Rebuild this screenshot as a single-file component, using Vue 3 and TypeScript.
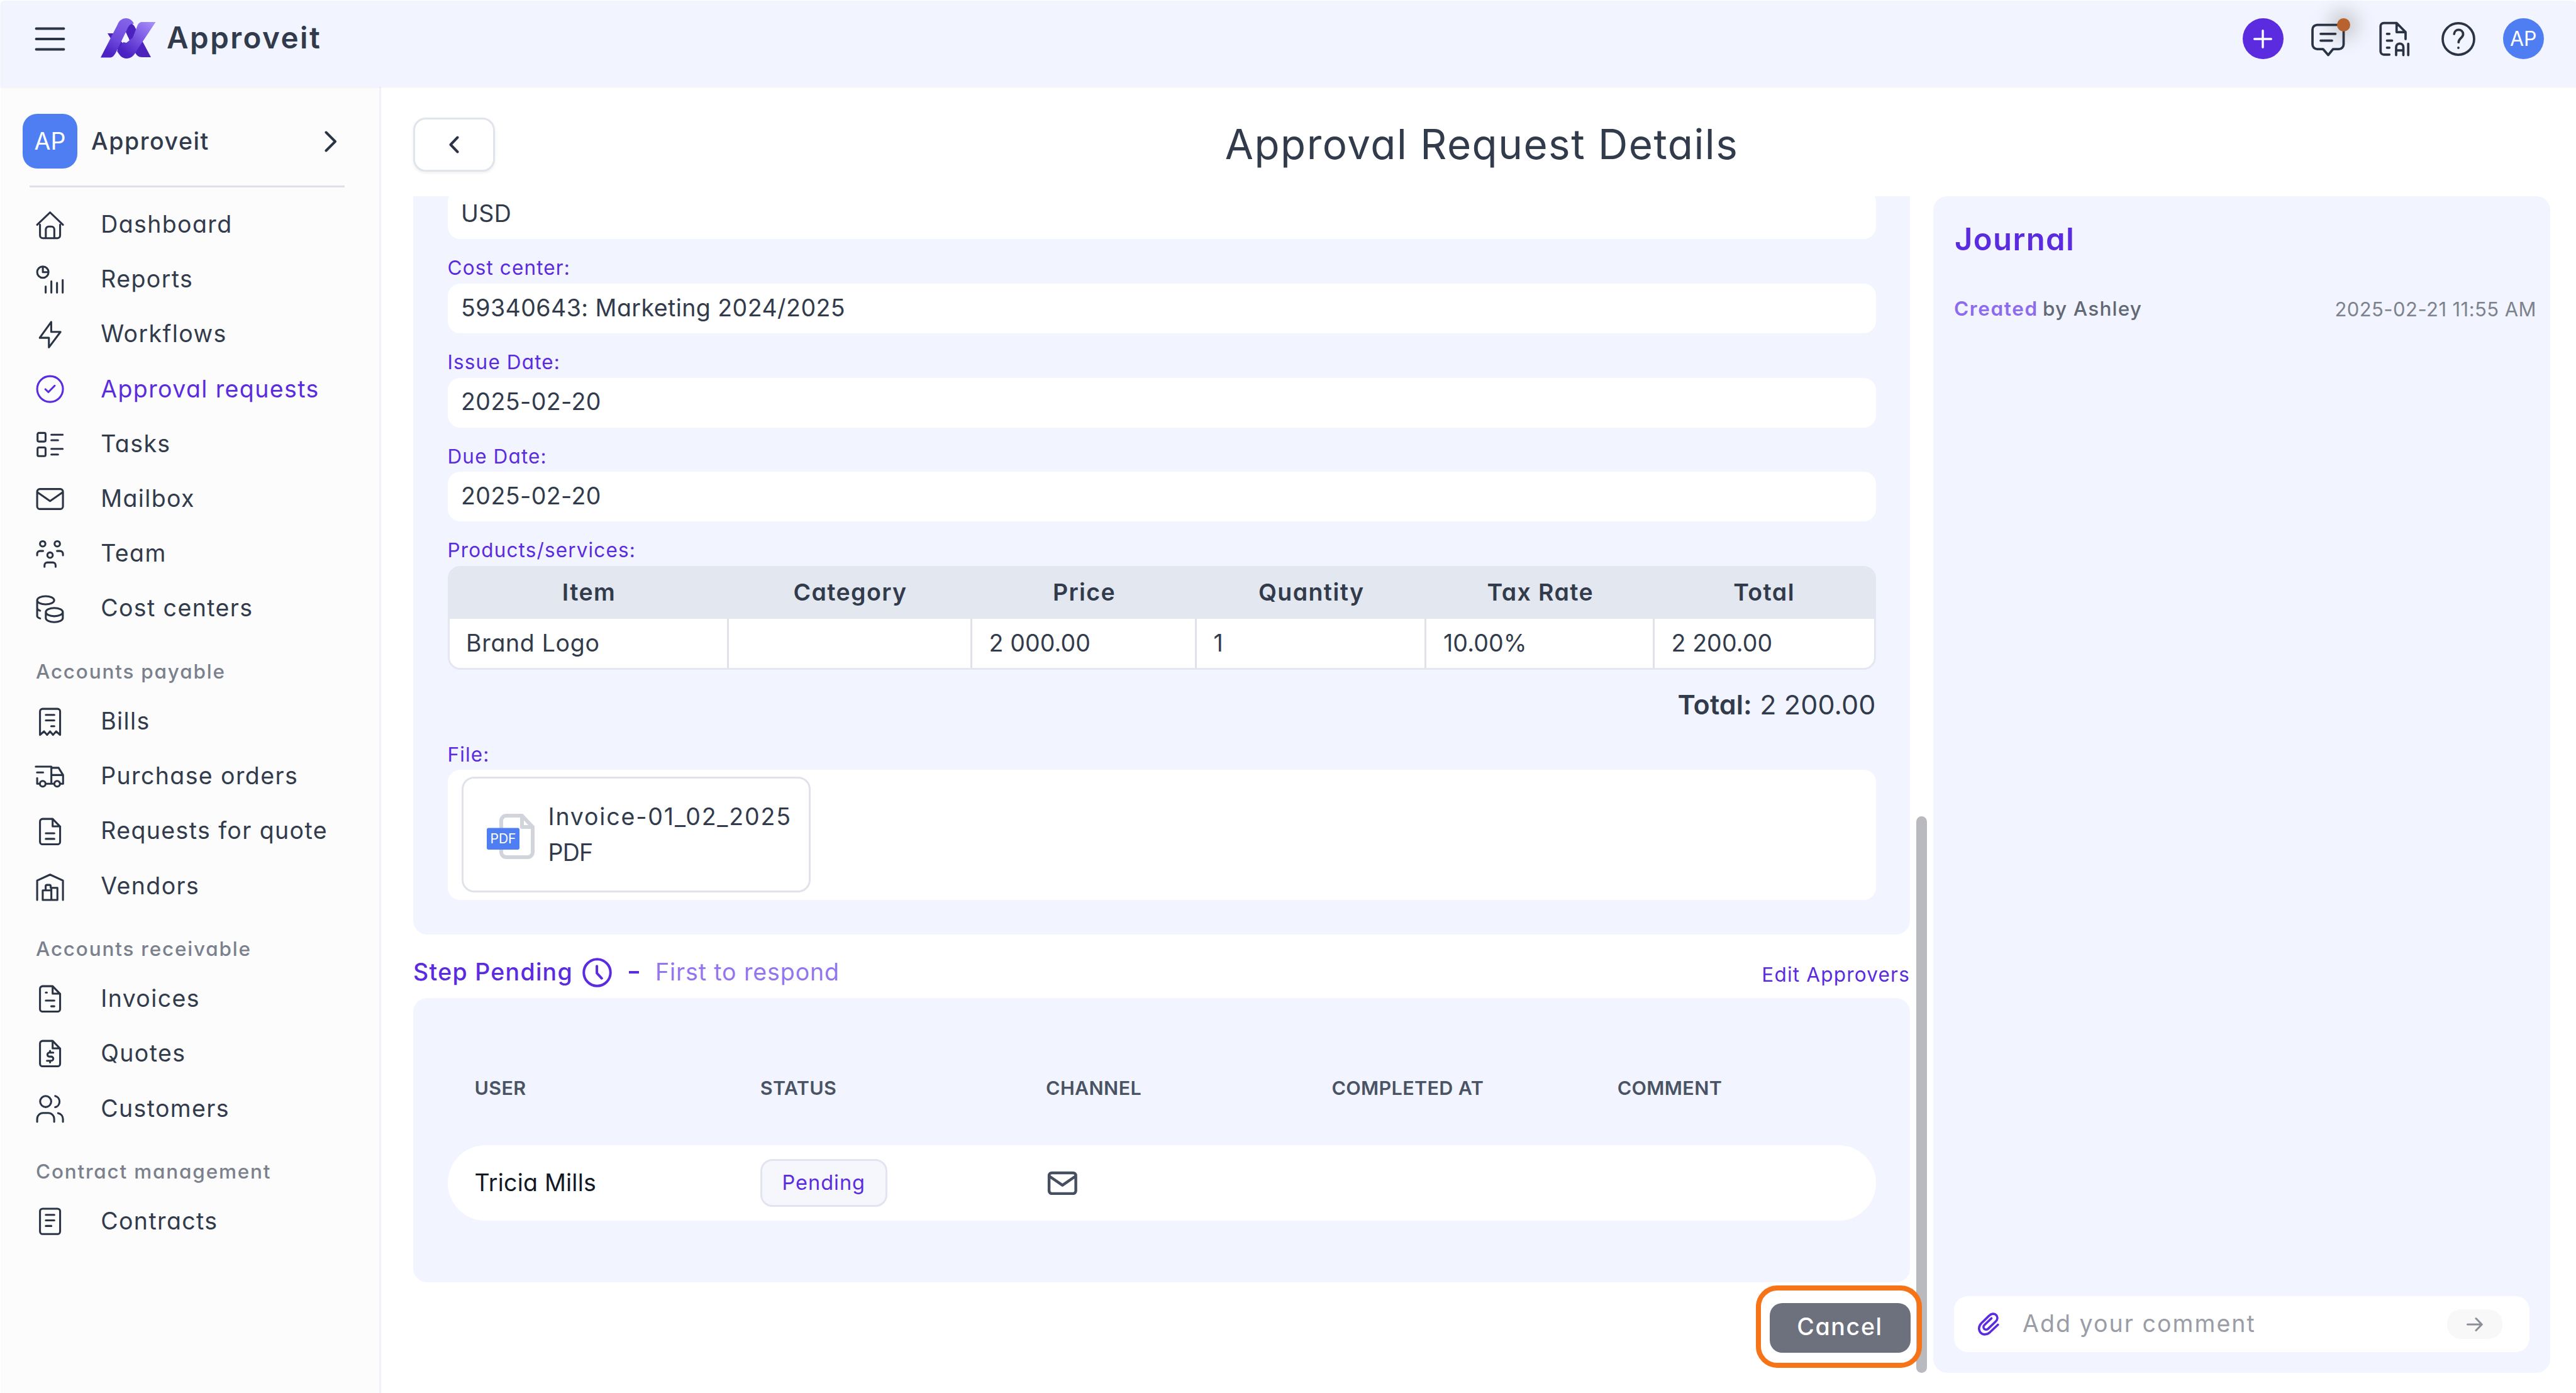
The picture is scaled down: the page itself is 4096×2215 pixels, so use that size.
<script setup lang="ts">
interface NavItem {
  label: string
  icon: string
  active?: boolean
}
interface NavGroup {
  title?: string
  items: NavItem[]
}
interface Field {
  label?: string
  value: string
}

const page = 'M14 2.5H6.2a2 2 0 0 0-2 2v15.7a2 2 0 0 0 2 2h11.6a2 2 0 0 0 2-2V8.5zV8.3h5.8'
const mail =
  'M4 4.7h16a2 2 0 0 1 2 2v11.5a2 2 0 0 1-2 2H4a2 2 0 0 1-2-2V6.7a2 2 0 0 1 2-2zM2.2 7.2l9.8 6.8l9.8-6.8'

const groups: NavGroup[] = [
  {
    items: [
      {
        label: 'Dashboard',
        icon: 'M2 12.4L12 2.8l10 9.6M4.2 12.3v8.3a2.2 2.2 0 0 0 2.2 2.2h11.2a2.2 2.2 0 0 0 2.2-2.2v-8.3M8.7 22.6v-6.6a2.2 2.2 0 0 1 2.2-2.2h2.2a2.2 2.2 0 0 1 2.2 2.2v6.6',
      },
      {
        label: 'Reports',
        icon: 'M2 6.7a4.4 4.4 0 1 0 8.8 0a4.4 4.4 0 1 0-8.8 0M6.4 2.6v4.1h4.2M8.6 17.8v4.8M13 13.8v8.8M17.4 15v7.6M21.8 12.8v9.8',
      },
      { label: 'Workflows', icon: 'M12.9 2.9v7.7h7.2l-9 12v-7.4H4z' },
      {
        label: 'Approval requests',
        active: true,
        icon: 'M2 12a10 10 0 1 0 20 0a10 10 0 1 0-20 0M8.4 12.2l2.3 2.2l4.9-5',
      },
      {
        label: 'Tasks',
        icon: 'M3.3 3.6h4.2a1 1 0 0 1 1 1v4.7a1 1 0 0 1-1 1H3.3a1 1 0 0 1-1-1V4.6a1 1 0 0 1 1-1zM3.3 14.9h4.2a1 1 0 0 1 1 1v4.7a1 1 0 0 1-1 1H3.3a1 1 0 0 1-1-1v-4.7a1 1 0 0 1 1-1zM13 5h8.8M13 9.3h5.2M13 16h8.8M13 20.4h5.2',
      },
      { label: 'Mailbox', icon: mail },
      {
        label: 'Team',
        icon: 'M4.2 4.75a2.1 2.1 0 1 0 4.2 0a2.1 2.1 0 1 0-4.2 0M15.5 4.75a2.1 2.1 0 1 0 4.2 0a2.1 2.1 0 1 0-4.2 0M9.9 13.5a2.1 2.1 0 1 0 4.2 0a2.1 2.1 0 1 0-4.2 0M2 13.7v-1.2a2.2 2.2 0 0 1 2.2-2.2h2.4M22 13.7v-1.2a2.2 2.2 0 0 0-2.2-2.2h-2.4M7.7 22.6v-1.2a2.2 2.2 0 0 1 2.2-2.2h4.2a2.2 2.2 0 0 1 2.2 2.2v1.2',
      },
      {
        label: 'Cost centers',
        icon: 'M2 5.6a6.6 3.2 0 1 0 13.2 0a6.6 3.2 0 1 0-13.2 0M2 5.6v12.2c0 .8.9 1.4 2.3 1.9M2 11.7c0 .8.9 1.5 2.3 2M8.7 14.8a6.6 3.2 0 1 0 13.2 0a6.6 3.2 0 1 0-13.2 0M8.7 14.8v4.6c0 1.8 3 3.2 6.6 3.2s6.6-1.4 6.6-3.2v-4.6',
      },
    ],
  },
  {
    title: 'Accounts payable',
    items: [
      {
        label: 'Bills',
        icon: 'M4.2 22.7V4.5a2 2 0 0 1 2-2h11.6a2 2 0 0 1 2 2v18.2l-3.1-2.7l-2.4 2.7L12 20l-2.3 2.7L7.3 20zM8.7 7.2h6.6M8.7 11.5h6.6M12.9 16h2.4',
      },
      {
        label: 'Purchase orders',
        icon: 'M.9 4.9H13v13.3M1.9 9.4h4.7M2 13.8v4.4h2.2M8.5 18.2h6.8M13 5.8h5.6l3.5 5.6v6.8h-2.4M13 11.4h9M4.1 18.2a2.2 2.2 0 1 0 4.4 0a2.2 2.2 0 1 0-4.4 0M15.3 18.2a2.2 2.2 0 1 0 4.4 0a2.2 2.2 0 1 0-4.4 0',
      },
      { label: 'Requests for quote', icon: page + 'M8.7 13.7h6.6M8.7 18h6.6' },
      {
        label: 'Vendors',
        icon: 'M2 22.9V7.9L12 3.3l10 4.6v15M6.3 15.5H13v7.4H6.3zM13 13.5h4.7v9.4H13zM8.6 15.5v-3.2a1 1 0 0 1 1-1h1.9a1 1 0 0 1 1 1v1.2',
      },
    ],
  },
  {
    title: 'Accounts receivable',
    items: [
      { label: 'Invoices', icon: page + 'M8.7 7.4h.8M8.7 13.7h6.6M12.9 18.1h2.4' },
      {
        label: 'Quotes',
        icon: page + 'M14.5 11.6h-3.3a1.6 1.6 0 0 0 0 3.1h1.7a1.6 1.6 0 0 1 0 3.2H9.6M12 10.3v1.3M12 17.9v1.3',
      },
      {
        label: 'Customers',
        icon: 'M4.3 6.6a4.3 4.3 0 1 0 8.6 0a4.3 4.3 0 1 0-8.6 0M16 2.3a4.5 4.5 0 0 1 0 8.7M2 22.3v-2.2a4.6 4.6 0 0 1 4.6-4.6h4a4.6 4.6 0 0 1 4.6 4.6v2.2M18.2 15.6a4.5 4.5 0 0 1 3.8 4.5v2.2',
      },
    ],
  },
  {
    title: 'Contract management',
    items: [
      {
        label: 'Contracts',
        icon: 'M6.2 2.4h11.6a2 2 0 0 1 2 2v15.7a2 2 0 0 1-2 2H6.2a2 2 0 0 1-2-2V4.4a2 2 0 0 1 2-2zM8.7 7.2h6.6M8.7 11.5h6.6M8.7 15.8h4.3',
      },
    ],
  },
]

const fields: Field[] = [
  { value: 'USD' },
  { label: 'Cost center:', value: '59340643: Marketing 2024/2025' },
  { label: 'Issue Date:', value: '2025-02-20' },
  { label: 'Due Date:', value: '2025-02-20' },
]

const productColumns: string[] = ['Item', 'Category', 'Price', 'Quantity', 'Tax Rate', 'Total']
const productRow: string[] = ['Brand Logo', '', '2 000.00', '1', '10.00%', '2 200.00']
const stepColumns: string[] = ['USER', 'STATUS', 'CHANNEL', 'COMPLETED AT', 'COMMENT']
</script>

<template>
  <div class="app">
    <header class="topbar">
      <svg class="burger" viewBox="0 0 48 40"><path d="M2 3.5h44M2 20h44M2 36.5h44" /></svg>
      <svg class="logo" viewBox="0 0 88 65">
        <defs>
          <linearGradient id="ribbonLeft" x1="0.7" y1="0" x2="0.2" y2="1">
            <stop offset="0" stop-color="#8463ea" />
            <stop offset="0.5" stop-color="#6f4bdd" />
            <stop offset="0.9" stop-color="#4b22c3" />
          </linearGradient>
          <linearGradient id="ribbonRight" x1="1" y1="0" x2="0.2" y2="1">
            <stop offset="0" stop-color="#ab92fb" />
            <stop offset="0.45" stop-color="#7c5ae4" />
            <stop offset="0.9" stop-color="#4b22c3" />
          </linearGradient>
        </defs>
        <path fill="#4b22bd" d="M11 24h12l26 34-8 6-8-4z" />
        <path fill="#4b22bd" d="M38 16c6-12 14-8 17-1l25 47H66c-6 0-9-3-12-9L40 22z" />
        <path fill="url(#ribbonRight)" d="M66 6h21.5L57 52c-4 8-9 12-16 12s-11-5-15-12l10-14 5 1 10-8 7-18c2-5 4-7 8-7z" />
        <path fill="url(#ribbonLeft)" d="M0 62.5L27 10C32-3 48-3 53 9c-6-1-9 4-11 9L24 55c-3 5-5 7.5-10 7.5z" />
        <path fill="#f2f5ff" d="M40.5 26l4.5 6.5-4.5 5.5-4.5-5.5z" />
      </svg>
      <span class="brand">Approveit</span>
      <div class="actions">
        <span class="round add">
          <svg viewBox="0 0 30 30"><path d="M15 1.7v26.6M1.7 15h26.6" /></svg>
        </span>
        <span class="action">
          <svg class="line" viewBox="0 0 24 24">
            <path d="M5 3h13.8a3 3 0 0 1 3 3v9.4a3 3 0 0 1-3 3h-3.7L12 22.2l-3.3-3.8H5a3 3 0 0 1-3-3V6a3 3 0 0 1 3-3zM7.2 8.7h9.4M7.2 13h7.2" />
          </svg>
          <i class="dot"></i>
        </span>
        <span class="action">
          <svg class="line" viewBox="-1 0 24 24">
            <path d="M8.7 21.9H5.1a2 2 0 0 1-2-2V3.8a2 2 0 0 1 2-2h8.2L19 7.6V12M13.3 1.9v5.7h5.6M7.2 8.7h1.5M7.2 13h3.2M7.2 17.5h1.5M13 22.2v-5a2.3 2.3 0 0 1 4.6 0v5M13 19.2h4.6M20.7 15v7.2" />
          </svg>
        </span>
        <span class="action">
          <svg class="line" viewBox="0 0 24 24">
            <path d="M2 12a10 10 0 1 0 20 0a10 10 0 1 0-20 0M9.3 8.8c.2-3.5 5.6-3.5 5.7.1c0 2.4-2.7 2.5-2.9 5.2M12 17.5v.1" />
          </svg>
        </span>
        <span class="round avatar">AP</span>
      </div>
    </header>

    <div class="body">
      <aside class="sidebar">
        <div class="company">
          <span class="badge">AP</span>
          <span class="company-name">Approveit</span>
          <svg class="chevron" viewBox="0 0 20 34"><path d="M2.5 2.5L17 17L2.5 31.5" /></svg>
        </div>
        <div class="divider"></div>
        <nav>
          <section v-for="(group, i) in groups" :key="i">
            <h2 v-if="group.title">{{ group.title }}</h2>
            <a v-for="item in group.items" :key="item.label" :class="{ active: item.active }">
              <svg viewBox="0 0 24 24"><path :d="item.icon" /></svg>
              <span>{{ item.label }}</span>
            </a>
          </section>
        </nav>
      </aside>

      <main>
        <div class="heading">
          <button class="back" type="button">
            <svg viewBox="0 0 18 28"><path d="M14.5 2.5L3.5 14l11 11.5" /></svg>
          </button>
          <h1>Approval Request Details</h1>
        </div>

        <div class="columns">
          <div class="scroller">
            <div class="panel details">
              <div v-for="(field, i) in fields" :key="i" class="field">
                <label v-if="field.label">{{ field.label }}</label>
                <div class="value">{{ field.value }}</div>
              </div>
              <div class="field">
                <label>Products/services:</label>
                <div class="table">
                  <span v-for="col in productColumns" :key="col" class="th">{{ col }}</span>
                  <span v-for="(cell, i) in productRow" :key="i" class="td">{{ cell }}</span>
                </div>
              </div>
              <div class="sum"><b>Total:</b> <span>2 200.00</span></div>
              <div class="field">
                <label>File:</label>
                <div class="files">
                  <div class="file">
                    <svg viewBox="0 0 76 72">
                      <path class="sheet" d="M56 3H31a8 8 0 0 0-8 8v50a8 8 0 0 0 8 8h34a8 8 0 0 0 8-8V21zv18h17" />
                      <rect y="22.5" width="52" height="34.5" rx="3" />
                      <text x="26" y="47" text-anchor="middle">PDF</text>
                    </svg>
                    <div class="file-name"><span>Invoice-01_02_2025</span><span class="ext">PDF</span></div>
                  </div>
                </div>
              </div>
            </div>

            <div class="step">
              <span class="step-title">Step Pending</span>
              <svg viewBox="0 0 24 24"><path d="M2 12a10 10 0 1 0 20 0a10 10 0 1 0-20 0M11.8 7.2v5.2l3.6 3.9" /></svg>
              <span class="dash"></span>
              <span class="rule">First to respond</span>
              <a class="edit">Edit Approvers</a>
            </div>

            <div class="panel approvers">
              <div class="row head">
                <span v-for="col in stepColumns" :key="col">{{ col }}</span>
              </div>
              <div class="row person">
                <span>Tricia Mills</span>
                <span><em>Pending</em></span>
                <span><svg viewBox="-0.4 0.5 24 24"><path :d="mail" /></svg></span>
              </div>
            </div>

            <div class="footer">
              <div class="ring"><button class="cancel" type="button">Cancel</button></div>
            </div>
          </div>

          <div class="track"><div class="thumb"></div></div>

          <aside class="panel journal">
            <h3>Journal</h3>
            <div class="entry">
              <span class="what">Created</span>
              <span class="who">by Ashley</span>
              <time>2025-02-21 11:55 AM</time>
            </div>
            <div class="comment">
              <svg class="clip" viewBox="0 0 34 37">
                <path d="M31.8 19.5L19.3 31.2C14.8 35.8 8 36 4.2 32C.6 28 1 21.5 5.5 17L18 4.9C21.3 1.5 26 1.2 29 4C31.8 7 31.5 11 28.3 14.2L16.5 25.6C14.5 27.5 11.8 27.8 10 26C8.3 24.2 8.6 21.7 10.5 19.8L21.5 9.2" />
              </svg>
              <span class="placeholder">Add your comment</span>
              <span class="send"><svg viewBox="0 0 26 22"><path d="M1.5 11h22.5M15 1.5L24.3 11L15 20.5" /></svg></span>
            </div>
          </aside>
        </div>
      </main>
    </div>
  </div>
</template>

<style>
html,
body {
  margin: 0;
  background: #ffffff;
}
</style>

<style scoped>
.app {
  box-sizing: border-box;
  width: 4096px;
  height: 2215px;
  overflow: hidden;
  padding: 1px 0 0 1px;
  display: flex;
  flex-direction: column;
  background: #ffffff;
  color: #323b4b;
  font-family: 'Inter', 'Open Sans', sans-serif;
  font-feature-settings: 'cv11' 1;
  font-size: 37.5px;
  line-height: 1;
  letter-spacing: 0.037em;
}
svg {
  display: block;
  flex: none;
  fill: none;
  stroke-linecap: round;
  stroke-linejoin: round;
}

/* Top bar */
.topbar {
  flex: none;
  box-sizing: border-box;
  height: 137px;
  padding: 0 51px 16px 54px;
  display: flex;
  align-items: center;
  background: #f2f5ff;
  border-radius: 6px 6px 0 0;
  box-shadow: 0 1px 3px rgba(0, 0, 0, 0.06);
  position: relative;
}
.burger {
  width: 49px;
  height: 40px;
  stroke: #2b3445;
  stroke-width: 3.8;
}
.logo {
  width: 88px;
  height: 65px;
  margin-left: 56px;
}
.logo path {
  stroke: none;
}
.brand {
  margin-left: 17px;
  padding-bottom: 3px;
  font-size: 47.5px;
  font-weight: 600;
  letter-spacing: 0.052em;
}
.actions {
  margin-left: auto;
  display: flex;
  gap: 38px;
}
.round,
.action {
  width: 65.5px;
  height: 65.5px;
  display: flex;
  align-items: center;
  justify-content: center;
  border-radius: 50%;
  position: relative;
}
.add {
  background: #5b2be0;
}
.add svg {
  width: 30px;
  height: 30px;
  stroke: #ffffff;
  stroke-width: 3.4;
}
.line {
  width: 60px;
  height: 60px;
  stroke: #2b3445;
  stroke-width: 1.5;
}
.dot {
  position: absolute;
  top: 0;
  right: -2px;
  width: 21px;
  height: 21px;
  border-radius: 50%;
  background: #b8622f;
  box-shadow: 0 0 28px 12px rgba(70, 70, 60, 0.25);
}
.avatar {
  background: #4f7ef3;
  color: #ffffff;
  font-size: 32px;
  letter-spacing: 0;
}

/* Sidebar */
.body {
  flex: 1;
  display: flex;
  min-height: 0;
}
.sidebar {
  flex: none;
  box-sizing: border-box;
  width: 605px;
  border-right: 3px solid #f1f1f9;
  background: #fcfcfd;
}
.company {
  display: flex;
  align-items: center;
  height: 87px;
  margin: 43px 0 0 35px;
}
.badge {
  width: 87px;
  height: 87px;
  border-radius: 23px;
  display: flex;
  align-items: center;
  justify-content: center;
  background: #4f7ef3;
  color: #ffffff;
  letter-spacing: 0;
}
.company-name {
  margin-left: 22px;
  font-weight: 500;
  letter-spacing: 0.042em;
}
.chevron {
  width: 20px;
  height: 34px;
  margin-left: auto;
  margin-right: 67px;
  stroke: #2b3445;
  stroke-width: 4;
}
.divider {
  height: 3px;
  margin: 27px 55px 15px 46px;
  background: #dde0ea;
}
nav h2 {
  margin: 0;
  box-sizing: border-box;
  height: 92.3px;
  padding: 41px 0 0 56px;
  font-size: 31.5px;
  line-height: 32px;
  font-weight: 500;
  letter-spacing: 0.057em;
  color: #7b818c;
}
nav a {
  display: flex;
  align-items: center;
  height: 87.22px;
  padding-left: 54px;
}
nav svg {
  width: 49.2px;
  height: 49.2px;
  margin-right: 56px;
  stroke: #2b3445;
  stroke-width: 1.5;
}
nav .active {
  color: #5b2be0;
}
nav .active svg {
  stroke: #5b2be0;
}

/* Main area */
main {
  flex: 1;
  padding-left: 51px;
  display: flex;
  flex-direction: column;
}
.heading {
  flex: none;
  display: flex;
  align-items: center;
  height: 174px;
  box-sizing: border-box;
  padding: 10px 41px 0 0;
}
.back {
  box-sizing: border-box;
  width: 130px;
  height: 86px;
  padding: 0;
  display: flex;
  align-items: center;
  justify-content: center;
  border: 3px solid #e0e5eb;
  border-radius: 20px;
  background: #ffffff;
  box-shadow: 0 2px 4px rgba(30, 40, 60, 0.08);
}
.back svg {
  width: 18px;
  height: 28px;
  stroke: #2b3445;
  stroke-width: 4;
}
h1 {
  flex: 1;
  margin: 0 130px 0 0;
  text-align: center;
  font-size: 65.5px;
  font-weight: 400;
  letter-spacing: 0.023em;
}
.columns {
  flex: 1;
  display: flex;
  min-height: 0;
}
.panel {
  box-sizing: border-box;
  background: #f2f5ff;
  border-radius: 22px;
}
.scroller {
  width: 2380px;
}
.details {
  display: flow-root;
  height: 1174px;
  padding: 0 54.5px;
  border-radius: 0 0 22px 22px;
  overflow: hidden;
}
.field:first-child {
  margin-top: -11px;
}
label {
  display: block;
  height: 70.8px;
  box-sizing: border-box;
  padding-top: 30px;
  font-size: 31.5px;
  line-height: 32px;
  letter-spacing: 0.036em;
  color: #5b2be0;
}
.value {
  box-sizing: border-box;
  height: 79px;
  display: flex;
  align-items: center;
  padding: 0 0 2px 21.5px;
  border-radius: 20px;
  background: #ffffff;
  letter-spacing: 0.012em;
}
.table {
  box-sizing: border-box;
  height: 165px;
  display: grid;
  grid-template-columns: 444px 387px 357px 365.5px 362.5px 1fr;
  grid-template-rows: 81px 1fr;
  border: 3px solid #e3e7ef;
  border-radius: 20px;
  overflow: hidden;
  background: #ffffff;
}
.th,
.td {
  display: flex;
  align-items: center;
}
.th {
  justify-content: center;
  padding-bottom: 3px;
  background: #e3e7ef;
  font-weight: 600;
}
.td {
  padding-left: 27px;
  border-right: 3px solid #dfe2ea;
  letter-spacing: 0.003em;
}
.td:nth-child(7) {
  padding-left: 26.5px;
  letter-spacing: 0.018em;
}
.td:last-child {
  border-right: 0;
}
.sum {
  height: 55.4px;
  padding-top: 33px;
  text-align: right;
  font-size: 43px;
  line-height: 44px;
  letter-spacing: 0.003em;
}
.sum b {
  font-weight: 600;
}
.files {
  box-sizing: border-box;
  height: 207px;
  padding: 11px 22px;
  border-radius: 20px;
  background: #ffffff;
}
.file {
  box-sizing: border-box;
  width: 555px;
  height: 184px;
  padding-left: 37px;
  display: flex;
  align-items: center;
  border: 3px solid #e0e3ea;
  border-radius: 20px;
}
.file svg {
  width: 76px;
  height: 72px;
  margin-top: 5px;
}
.sheet {
  stroke: #d2d4db;
  stroke-width: 6;
}
.file rect {
  fill: #4f7ef3;
}
.file text {
  fill: #ffffff;
  font-size: 21px;
  letter-spacing: 0;
}
.file-name {
  margin-left: 22px;
  display: flex;
  flex-direction: column;
  line-height: 57.5px;
  letter-spacing: 0.049em;
}
.ext {
  letter-spacing: -0.02em;
}

/* Approval step */
.step {
  height: 101px;
  display: flex;
  align-items: center;
  padding-top: 19px;
  box-sizing: border-box;
}
.step-title {
  color: #5b2be0;
  font-weight: 500;
  letter-spacing: 0.034em;
}
.step svg {
  width: 51px;
  height: 51px;
  margin-left: 13px;
  stroke: #5b2be0;
  stroke-width: 1.9;
}
.dash {
  width: 16px;
  height: 4px;
  margin: 0 26px 0 25px;
  background: #5b2be0;
}
.rule {
  letter-spacing: 0.024em;
  color: #9375f0;
}
.edit {
  margin-left: auto;
  padding-top: 8px;
  font-size: 31.5px;
  letter-spacing: 0.038em;
  color: #5b2be0;
}
.approvers {
  height: 452px;
  padding: 126px 54.5px 0;
}
.row {
  display: grid;
  grid-template-columns: repeat(5, 454.3px);
  align-items: center;
  padding-left: 43px;
}
.head {
  height: 34px;
  margin-bottom: 74px;
  font-size: 30.5px;
  font-weight: 600;
  letter-spacing: 0.012em;
  color: #4a5363;
}
.person {
  height: 120px;
  border-radius: 60px;
  background: #ffffff;
  color: #121826;
  letter-spacing: 0.006em;
}
.person em {
  box-sizing: border-box;
  width: 202px;
  height: 76px;
  display: flex;
  align-items: center;
  justify-content: center;
  border: 3px solid #e2e5f1;
  border-radius: 19px;
  background: #f6f7fc;
  color: #5b2be0;
  font-style: normal;
  font-size: 32.5px;
  letter-spacing: 0.03em;
}
.person svg {
  width: 51px;
  height: 51px;
  stroke: #464f60;
  stroke-width: 2.1;
}
.footer {
  display: flex;
  justify-content: flex-end;
  height: 145px;
  padding-top: 5px;
  margin-right: -19px;
}
.ring {
  box-sizing: border-box;
  position: relative;
  z-index: 1;
  width: 264px;
  height: 131px;
  border: 8px solid #f67318;
  border-radius: 34px;
  display: flex;
  align-items: center;
  justify-content: center;
}
.cancel {
  width: 224px;
  height: 79px;
  padding: 0 0 2px;
  flex: none;
  margin-top: 3px;
  margin-right: -3px;
  border: 0;
  border-radius: 20px;
  background: #6c717d;
  color: #ffffff;
  font: inherit;
  font-weight: 500;
  letter-spacing: 0.045em;
}
.track {
  width: 17px;
  padding: 986px 10px 0;
}
.thumb {
  height: 885px;
  border-radius: 9px;
  background: #b9babf;
}

/* Journal */
.journal {
  width: 981px;
  height: 1871px;
  padding: 0 33px 33px;
  display: flex;
  flex-direction: column;
}
h3 {
  margin: 44px 0 0 1px;
  font-size: 49px;
  line-height: 50px;
  font-weight: 600;
  color: #5b2be0;
}
.entry {
  margin: 69px -11px 0 0;
  display: flex;
  align-items: center;
  height: 32px;
  font-size: 31.5px;
}
.what {
  color: #8c6bee;
  font-weight: 600;
  letter-spacing: 0.052em;
}
.who {
  margin-left: 7px;
  font-weight: 500;
  letter-spacing: 0.038em;
  color: #626874;
}
time {
  margin-left: auto;
  font-size: 31px;
  letter-spacing: 0.014em;
  color: #7d828c;
}
.comment {
  margin-top: auto;
  height: 89px;
  padding: 0 43px 0 38px;
  display: flex;
  align-items: center;
  border-radius: 22px;
  background: #ffffff;
}
.clip {
  width: 34px;
  height: 37px;
  stroke: #5b2be0;
  stroke-width: 3.6;
}
.placeholder {
  margin-left: 37px;
  padding-bottom: 2px;
  letter-spacing: 0.055em;
  color: #9a9da6;
}
.send {
  width: 88px;
  height: 47px;
  margin-left: auto;
  border-radius: 22px;
  display: flex;
  align-items: center;
  justify-content: center;
  background: #f8f8f9;
}
.send svg {
  width: 26px;
  height: 22px;
  stroke: #8b8f98;
  stroke-width: 3;
}
</style>
